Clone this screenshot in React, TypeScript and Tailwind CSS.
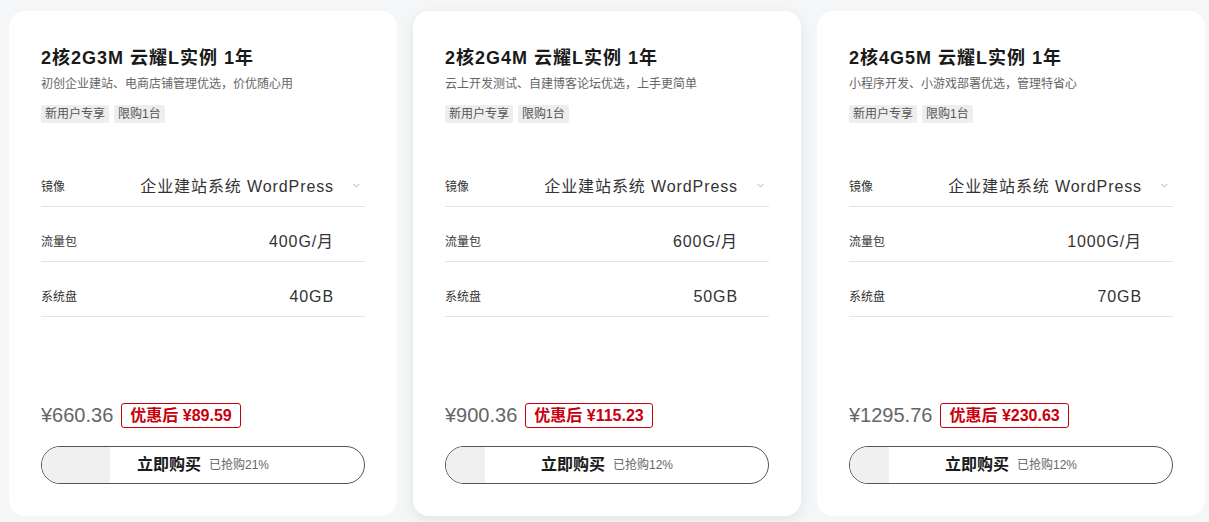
import { ChevronDown } from "lucide-react"

type Plan = {
    title: string
    desc: string
    traffic: string
    disk: string
    price: string
    deal: string
    sold: number
    raised?: boolean
}

const plans: Plan[] = [
    { title: "2核2G3M 云耀L实例 1年", desc: "初创企业建站、电商店铺管理优选，价优随心用", traffic: "400G/月", disk: "40GB", price: "¥660.36", deal: "¥89.59", sold: 21 },
    { title: "2核2G4M 云耀L实例 1年", desc: "云上开发测试、自建博客论坛优选，上手更简单", traffic: "600G/月", disk: "50GB", price: "¥900.36", deal: "¥115.23", sold: 12, raised: true },
    { title: "2核4G5M 云耀L实例 1年", desc: "小程序开发、小游戏部署优选，管理特省心", traffic: "1000G/月", disk: "70GB", price: "¥1295.76", deal: "¥230.63", sold: 12 },
]

const font = "font-['Liberation_Sans','Noto_Sans_CJK_SC',sans-serif]"

function Row({ label, value, select }: { label: string; value: string; select?: boolean }) {
    return (
        <div className="mt-[14px] flex h-[41px] items-center border-b border-[#e5e5e5] pt-[2px]">
            <span className="text-[12px] text-[#333]">{label}</span>
            <span className="ml-auto text-[16px] tracking-[0.9px] text-[#333]">{value}</span>
            <span className="flex w-[31px] justify-end pr-[3px] pb-[4px]">
                {select && <ChevronDown size={11} strokeWidth={1.5} className="text-[#888]" />}
            </span>
        </div>
    )
}

function PlanCard({ plan }: { plan: Plan }) {
    return (
        <div
            className={`flex h-[505px] w-[388px] flex-col rounded-2xl bg-white px-[32px] pt-[35px] pb-[32px] ${
                plan.raised ? "shadow-[0_4px_14px_rgba(0,0,0,0.08)]" : ""
            }`}
        >
            <h3 className="text-[18px] leading-[24px] font-bold tracking-[1px] text-[#191919]">{plan.title}</h3>
            <p className="mt-[5px] text-[12px] leading-[18px] text-[#666]">{plan.desc}</p>
            <div className="mt-[12px] flex gap-[5px]">
                <span className="h-[18px] rounded-[2px] bg-[#eeeeee] px-[4px] text-[12px] leading-[18px] text-[#555]">新用户专享</span>
                <span className="h-[18px] rounded-[2px] bg-[#eeeeee] px-[4px] text-[12px] leading-[18px] text-[#555]">限购1台</span>
            </div>
            <div className="mt-[29px]">
                <Row label="镜像" value="企业建站系统 WordPress" select />
                <Row label="流量包" value={plan.traffic} />
                <Row label="系统盘" value={plan.disk} />
            </div>
            <div className="mt-auto">
                <div className="flex items-center">
                    <span className="text-[20px] leading-[25px] text-[#666]">{plan.price}</span>
                    <span className="ml-[8px] flex h-[25px] items-center rounded-[3px] border border-[#c7000b] px-[8px] text-[16px] font-bold text-[#c7000b]">
                        优惠后 {plan.deal}
                    </span>
                </div>
                <div className="relative mt-[18px] flex h-[38px] items-center justify-center overflow-hidden rounded-full border border-[#555]">
                    <div className="absolute inset-y-0 left-0 bg-[#f0f0f0]" style={{ width: `${plan.sold}%` }} />
                    <span className="relative text-[16px] font-bold text-[#191919]">立即购买</span>
                    <span className="relative ml-[8px] text-[12px] text-[#666]">已抢购{plan.sold}%</span>
                </div>
            </div>
        </div>
    )
}

export default function App() {
    return (
        <div className={`flex h-[522px] w-[1209px] gap-[16px] bg-[#f5f6f8] pt-[11px] pl-[9px] ${font}`}>
            {plans.map((p) => (
                <PlanCard key={p.title} plan={p} />
            ))}
        </div>
    )
}
